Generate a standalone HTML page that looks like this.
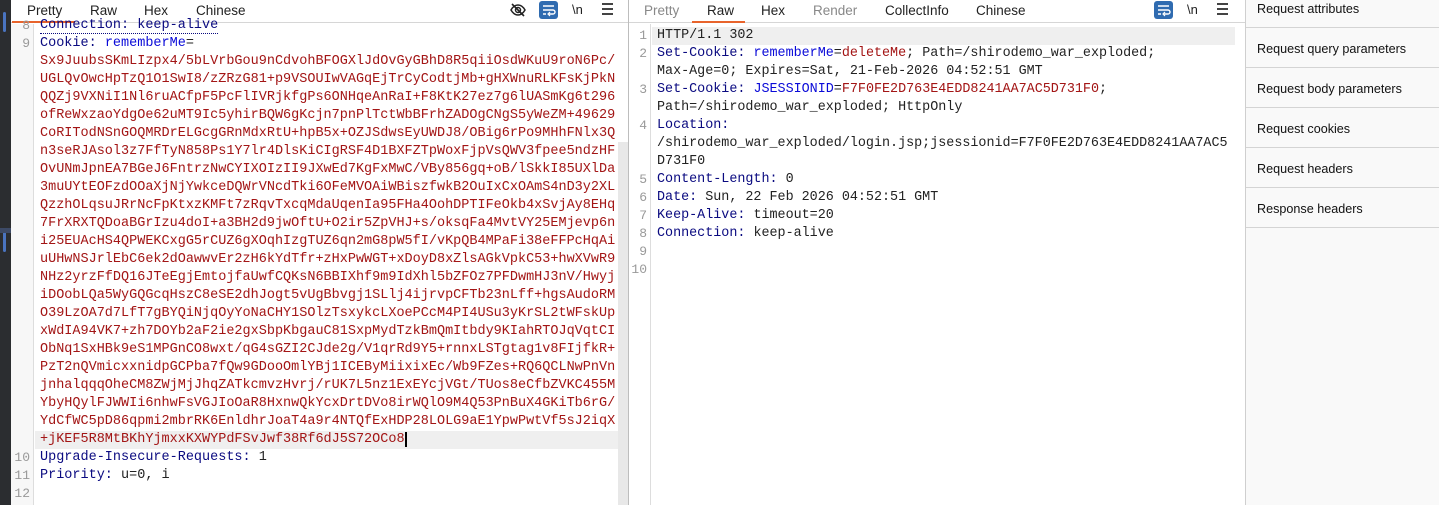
<!DOCTYPE html>
<html><head><meta charset="utf-8"><style>
*{margin:0;padding:0;box-sizing:border-box}
body{width:1439px;height:505px;overflow:hidden;background:#fff;font-family:"Liberation Sans",sans-serif;position:relative}
.abs{position:absolute}
.tabs{position:absolute;top:0;height:23px;border-bottom:1px solid #d6d6d6;background:#fff}
.tab{position:absolute;top:3px;font-size:13.5px;color:#222}
.code{position:absolute;font-family:"Liberation Mono",monospace;white-space:pre;line-height:18px}
.ln{position:absolute;font-family:"Liberation Mono",monospace;color:#999;text-align:right;line-height:18px;font-size:13px}
.h{color:#0a0a80}.b{color:#0a0ad8}.r{color:#a31515}.k{color:#222}
.side div{height:40px;border-bottom:1px solid #d4d4d4;font-size:12.6px;color:#111;padding:0 0 0 11px;line-height:17px}
</style></head><body>
<div class="abs" style="left:0;top:0;width:11px;height:505px;background:#2b2d30"></div>
<div class="abs" style="left:3px;top:12px;width:3px;height:20px;background:#4a74c0;border-radius:2px"></div>
<div class="abs" style="left:3px;top:232px;width:3px;height:20px;background:#4a74c0;border-radius:2px"></div>
<div class="abs" style="left:0;top:228px;width:11px;height:5px;background:#3d4a66"></div>
<div class="tabs" style="left:11px;width:617px"></div>
<div class="abs" style="left:12px;top:21px;width:63px;height:2px;background:#e8642c"></div>
<div class="tab" style="left:27px">Pretty</div>
<div class="tab" style="left:90px">Raw</div>
<div class="tab" style="left:144px">Hex</div>
<div class="tab" style="left:196px">Chinese</div>
<svg class="abs" style="left:510px;top:2px" width="16" height="16" viewBox="0 0 16 16"><path d="M1 8c2-3.5 4.5-5 7-5s5 1.5 7 5c-2 3.5-4.5 5-7 5S3 11.5 1 8z" fill="none" stroke="#222" stroke-width="1.5"/><circle cx="8" cy="8" r="2.5" fill="none" stroke="#222" stroke-width="1.5"/><path d="M2 2l12 12" stroke="#222" stroke-width="1.6"/></svg>
<div class="abs" style="left:539px;top:1px;width:19px;height:18px;background:#2f6bb0;border-radius:3px"></div>
<svg class="abs" style="left:541px;top:3px" width="15" height="14" viewBox="0 0 15 14"><path d="M2 3h11M2 7h10a2 2 0 0 1 0 4H8M2 11h3" stroke="#fff" stroke-width="1.4" fill="none"/><path d="M9 9l-2 2 2 2" stroke="#fff" stroke-width="1.2" fill="none"/></svg>
<div class="abs" style="left:572px;top:2px;font-size:13px;color:#222">\n</div>
<div class="abs" style="left:602px;top:3px;width:11px;height:2px;background:#444;box-shadow:0 5px 0 #444,0 10px 0 #444"></div>
<div class="abs" style="left:11px;top:24px;width:23px;height:481px;background:#f7f7f7;border-right:1px solid #ddd"></div>
<div class="abs" style="left:618px;top:142px;width:10px;height:363px;background:#e8e8e8"></div>
<div class="abs" style="left:628px;top:0;width:1px;height:505px;background:#bdbdbd"></div>
<div class="abs" style="left:35px;top:431px;width:583px;height:18px;background:#efefef"></div>
<div class="ln" style="left:12px;top:17px;width:18px">8<br>9<br><br><br><br><br><br><br><br><br><br><br><br><br><br><br><br><br><br><br><br><br><br><br>10<br>11<br>12</div>
<div class="code" style="left:40px;top:17px;font-size:13.5px"><span class="h" style="border-bottom:1px dotted #0a0a80">Connection: keep-alive</span>
<span class="h">Cookie: </span><span class="b">rememberMe</span><span class="k">=</span>
<span class="r">Sx9JuubsSKmLIzpx4/5bLVrbGou9nCdvohBFOGXlJdOvGyGBhD8R5qiiOsdWKuU9roN6Pc/
UGLQvOwcHpTzQ1O1SwI8/zZRzG81+p9VSOUIwVAGqEjTrCyCodtjMb+gHXWnuRLKFsKjPkN
QQZj9VXNiI1Nl6ruACfpF5PcFlIVRjkfgPs6ONHqeAnRaI+F8KtK27ez7g6lUASmKg6t296
ofReWxzaoYdgOe62uMT9Ic5yhirBQW6gKcjn7pnPlTctWbBFrhZADOgCNgS5yWeZM+49629
CoRITodNSnGOQMRDrELGcgGRnMdxRtU+hpB5x+OZJSdwsEyUWDJ8/OBig6rPo9MHhFNlx3Q
n3seRJAsol3z7FfTyN858Ps1Y7lr4DlsKiCIgRSF4D1BXFZTpWoxFjpVsQWV3fpee5ndzHF
OvUNmJpnEA7BGeJ6FntrzNwCYIXOIzII9JXwEd7KgFxMwC/VBy856gq+oB/lSkkI85UXlDa
3muUYtEOFzdOOaXjNjYwkceDQWrVNcdTki6OFeMVOAiWBiszfwkB2OuIxCxOAmS4nD3y2XL
QzzhOLqsuJRrNcFpKtxzKMFt7zRqvTxcqMdaUqenIa95FHa4OohDPTIFeOkb4xSvjAy8EHq
7FrXRXTQDoaBGrIzu4doI+a3BH2d9jwOftU+O2ir5ZpVHJ+s/oksqFa4MvtVY25EMjevp6n
i25EUAcHS4QPWEKCxgG5rCUZ6gXOqhIzgTUZ6qn2mG8pW5fI/vKpQB4MPaFi38eFFPcHqAi
uUHwNSJrlEbC6ek2dOawwvEr2zH6kYdTfr+zHxPwWGT+xDoyD8xZlsAGkVpkC53+hwXVwR9
NHz2yrzFfDQ16JTeEgjEmtojfaUwfCQKsN6BBIXhf9m9IdXhl5bZFOz7PFDwmHJ3nV/Hwyj
iDOobLQa5WyGQGcqHszC8eSE2dhJogt5vUgBbvgj1SLlj4ijrvpCFTb23nLff+hgsAudoRM
O39LzOA7d7LfT7gBYQiNjqOyYoNaCHY1SOlzTsxykcLXoePCcM4PI4USu3yKrSL2tWFskUp
xWdIA94VK7+zh7DOYb2aF2ie2gxSbpKbgauC81SxpMydTzkBmQmItbdy9KIahRTOJqVqtCI
ObNq1SxHBk9eS1MPGnCO8wxt/qG4sGZI2CJde2g/V1qrRd9Y5+rnnxLSTgtag1v8FIjfkR+
PzT2nQVmicxxnidpGCPba7fQw9GDooOmlYBj1ICEByMiixixEc/Wb9FZes+RQ6QCLNwPnVn
jnhalqqqOheCM8ZWjMjJhqZATkcmvzHvrj/rUK7L5nz1ExEYcjVGt/TUos8eCfbZVKC455M
YbyHQylFJWWIi6nhwFsVGJIoOaR8HxnwQkYcxDrtDVo8irWQlO9M4Q53PnBuX4GKiTb6rG/
YdCfWC5pD86qpmi2mbrRK6EnldhrJoaT4a9r4NTQfExHDP28LOLG9aE1YpwPwtVf5sJ2iqX
+jKEF5R8MtBKhYjmxxKXWYPdFSvJwf38Rf6dJ5S72OCo8</span><span style="border-left:2px solid #000"></span>
<span class="h">Upgrade-Insecure-Requests: </span><span class="k">1</span>
<span class="h">Priority: </span><span class="k">u=0, i</span></div>
<div class="tabs" style="left:629px;width:616px"></div>
<div class="abs" style="left:692px;top:21px;width:53px;height:2px;background:#e8642c"></div>
<div class="tab" style="left:644px;color:#888">Pretty</div>
<div class="tab" style="left:707px">Raw</div>
<div class="tab" style="left:761px">Hex</div>
<div class="tab" style="left:813px;color:#888">Render</div>
<div class="tab" style="left:885px">CollectInfo</div>
<div class="tab" style="left:976px">Chinese</div>
<div class="abs" style="left:1154px;top:1px;width:19px;height:18px;background:#2f6bb0;border-radius:3px"></div>
<svg class="abs" style="left:1156px;top:3px" width="15" height="14" viewBox="0 0 15 14"><path d="M2 3h11M2 7h10a2 2 0 0 1 0 4H8M2 11h3" stroke="#fff" stroke-width="1.4" fill="none"/><path d="M9 9l-2 2 2 2" stroke="#fff" stroke-width="1.2" fill="none"/></svg>
<div class="abs" style="left:1187px;top:2px;font-size:13px;color:#222">\n</div>
<div class="abs" style="left:1217px;top:3px;width:11px;height:2px;background:#444;box-shadow:0 5px 0 #444,0 10px 0 #444"></div>
<div class="abs" style="left:629px;top:24px;width:22px;height:481px;background:#fff;border-right:1px solid #ddd"></div>
<div class="abs" style="left:652px;top:27px;width:583px;height:18px;background:#efefef"></div>
<div class="ln" style="left:631px;top:27px;width:16px">1<br>2<br><br>3<br><br>4<br><br><br>5<br>6<br>7<br>8<br>9<br>10</div>
<div class="code" style="left:657px;top:27px;font-size:13.4px"><span class="k">HTTP/1.1 302</span>
<span class="h">Set-Cookie: </span><span class="b">rememberMe</span><span class="k">=</span><span class="r">deleteMe</span><span class="k">; Path=/shirodemo_war_exploded;
Max-Age=0; Expires=Sat, 21-Feb-2026 04:52:51 GMT</span>
<span class="h">Set-Cookie: </span><span class="b">JSESSIONID</span><span class="k">=</span><span class="r">F7F0FE2D763E4EDD8241AA7AC5D731F0</span><span class="k">;
Path=/shirodemo_war_exploded; HttpOnly</span>
<span class="h">Location: </span>
<span class="k">/shirodemo_war_exploded/login.jsp;jsessionid=F7F0FE2D763E4EDD8241AA7AC5
D731F0</span>
<span class="h">Content-Length: </span><span class="k">0</span>
<span class="h">Date: </span><span class="k">Sun, 22 Feb 2026 04:52:51 GMT</span>
<span class="h">Keep-Alive: </span><span class="k">timeout=20</span>
<span class="h">Connection: </span><span class="k">keep-alive</span></div>
<div class="abs" style="left:1245px;top:0;width:1px;height:505px;background:#cfcfcf"></div>
<div class="abs side" style="left:1246px;top:-12px;width:193px;height:517px;background:#f9f9f9">
<div style="padding-top:13px">Request attributes</div>
<div style="padding-top:13px">Request query parameters</div>
<div style="padding-top:13px">Request body parameters</div>
<div style="padding-top:13px">Request cookies</div>
<div style="padding-top:13px">Request headers</div>
<div style="padding-top:13px">Response headers</div>
</div>
</body></html>
